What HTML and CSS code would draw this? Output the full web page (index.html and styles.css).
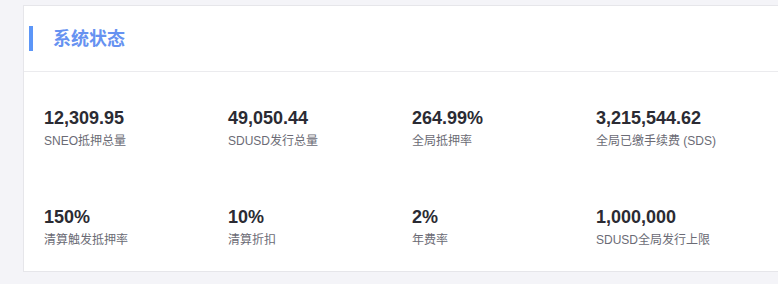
FILE: index.html
```html
<!DOCTYPE html>
<html lang="zh-CN">
<head>
<meta charset="UTF-8">
<meta name="viewport" content="width=device-width, initial-scale=1.0">
<title>系统状态</title>
<link rel="stylesheet" href="styles.css">
</head>
<body>

  <div class="panel">
    <div class="panel-header">
      <span class="panel-bar"></span>
      <h2 class="panel-title">系统状态</h2>
    </div>

    <div class="stats">
      <div class="stat">
        <div class="stat-value">12,309.95</div>
        <div class="stat-label">SNEO抵押总量</div>
      </div>
      <div class="stat">
        <div class="stat-value">49,050.44</div>
        <div class="stat-label">SDUSD发行总量</div>
      </div>
      <div class="stat">
        <div class="stat-value">264.99%</div>
        <div class="stat-label">全局抵押率</div>
      </div>
      <div class="stat">
        <div class="stat-value">3,215,544.62</div>
        <div class="stat-label">全局已缴手续费 (SDS)</div>
      </div>

      <div class="stat">
        <div class="stat-value">150%</div>
        <div class="stat-label">清算触发抵押率</div>
      </div>
      <div class="stat">
        <div class="stat-value">10%</div>
        <div class="stat-label">清算折扣</div>
      </div>
      <div class="stat">
        <div class="stat-value">2%</div>
        <div class="stat-label">年费率</div>
      </div>
      <div class="stat">
        <div class="stat-value">1,000,000</div>
        <div class="stat-label">SDUSD全局发行上限</div>
      </div>
    </div>
  </div>

</body>
</html>
```

FILE: styles.css
```css
html {
  overflow: hidden;
}

body {
  margin: 0;
  padding: 5px 0 0 23px;
  background-color: #f4f4f8;
  font-family: "Liberation Sans", Arial, "Noto Sans CJK SC", sans-serif;
}

/* the card runs off the right side of the window */
.panel {
  background-color: #fff;
  border: 1px solid #e6e6ea;
  border-right: none;
}

.panel-header {
  display: flex;
  align-items: center;
  height: 65px;
  padding-left: 5px;
  border-bottom: 1px solid #ebebee;
}
.panel-bar {
  width: 4px;
  height: 25px;
  background-color: #5c96f8;
}
.panel-title {
  margin: 0 0 0 20px;
  font-size: 18px;
  font-weight: bold;
  color: #6692f1;
  line-height: 24px;
}

.stats {
  display: grid;
  grid-template-columns: repeat(4, 184px);
  row-gap: 55px;
  padding: 34px 20px 22px;
}
.stat-value {
  font-size: 18px;
  font-weight: bold;
  line-height: 24px;
  color: #2b2b33;
  margin-bottom: 2px;
}
.stat-label {
  font-size: 12px;
  line-height: 18px;
  color: #6b6b75;
}
```
